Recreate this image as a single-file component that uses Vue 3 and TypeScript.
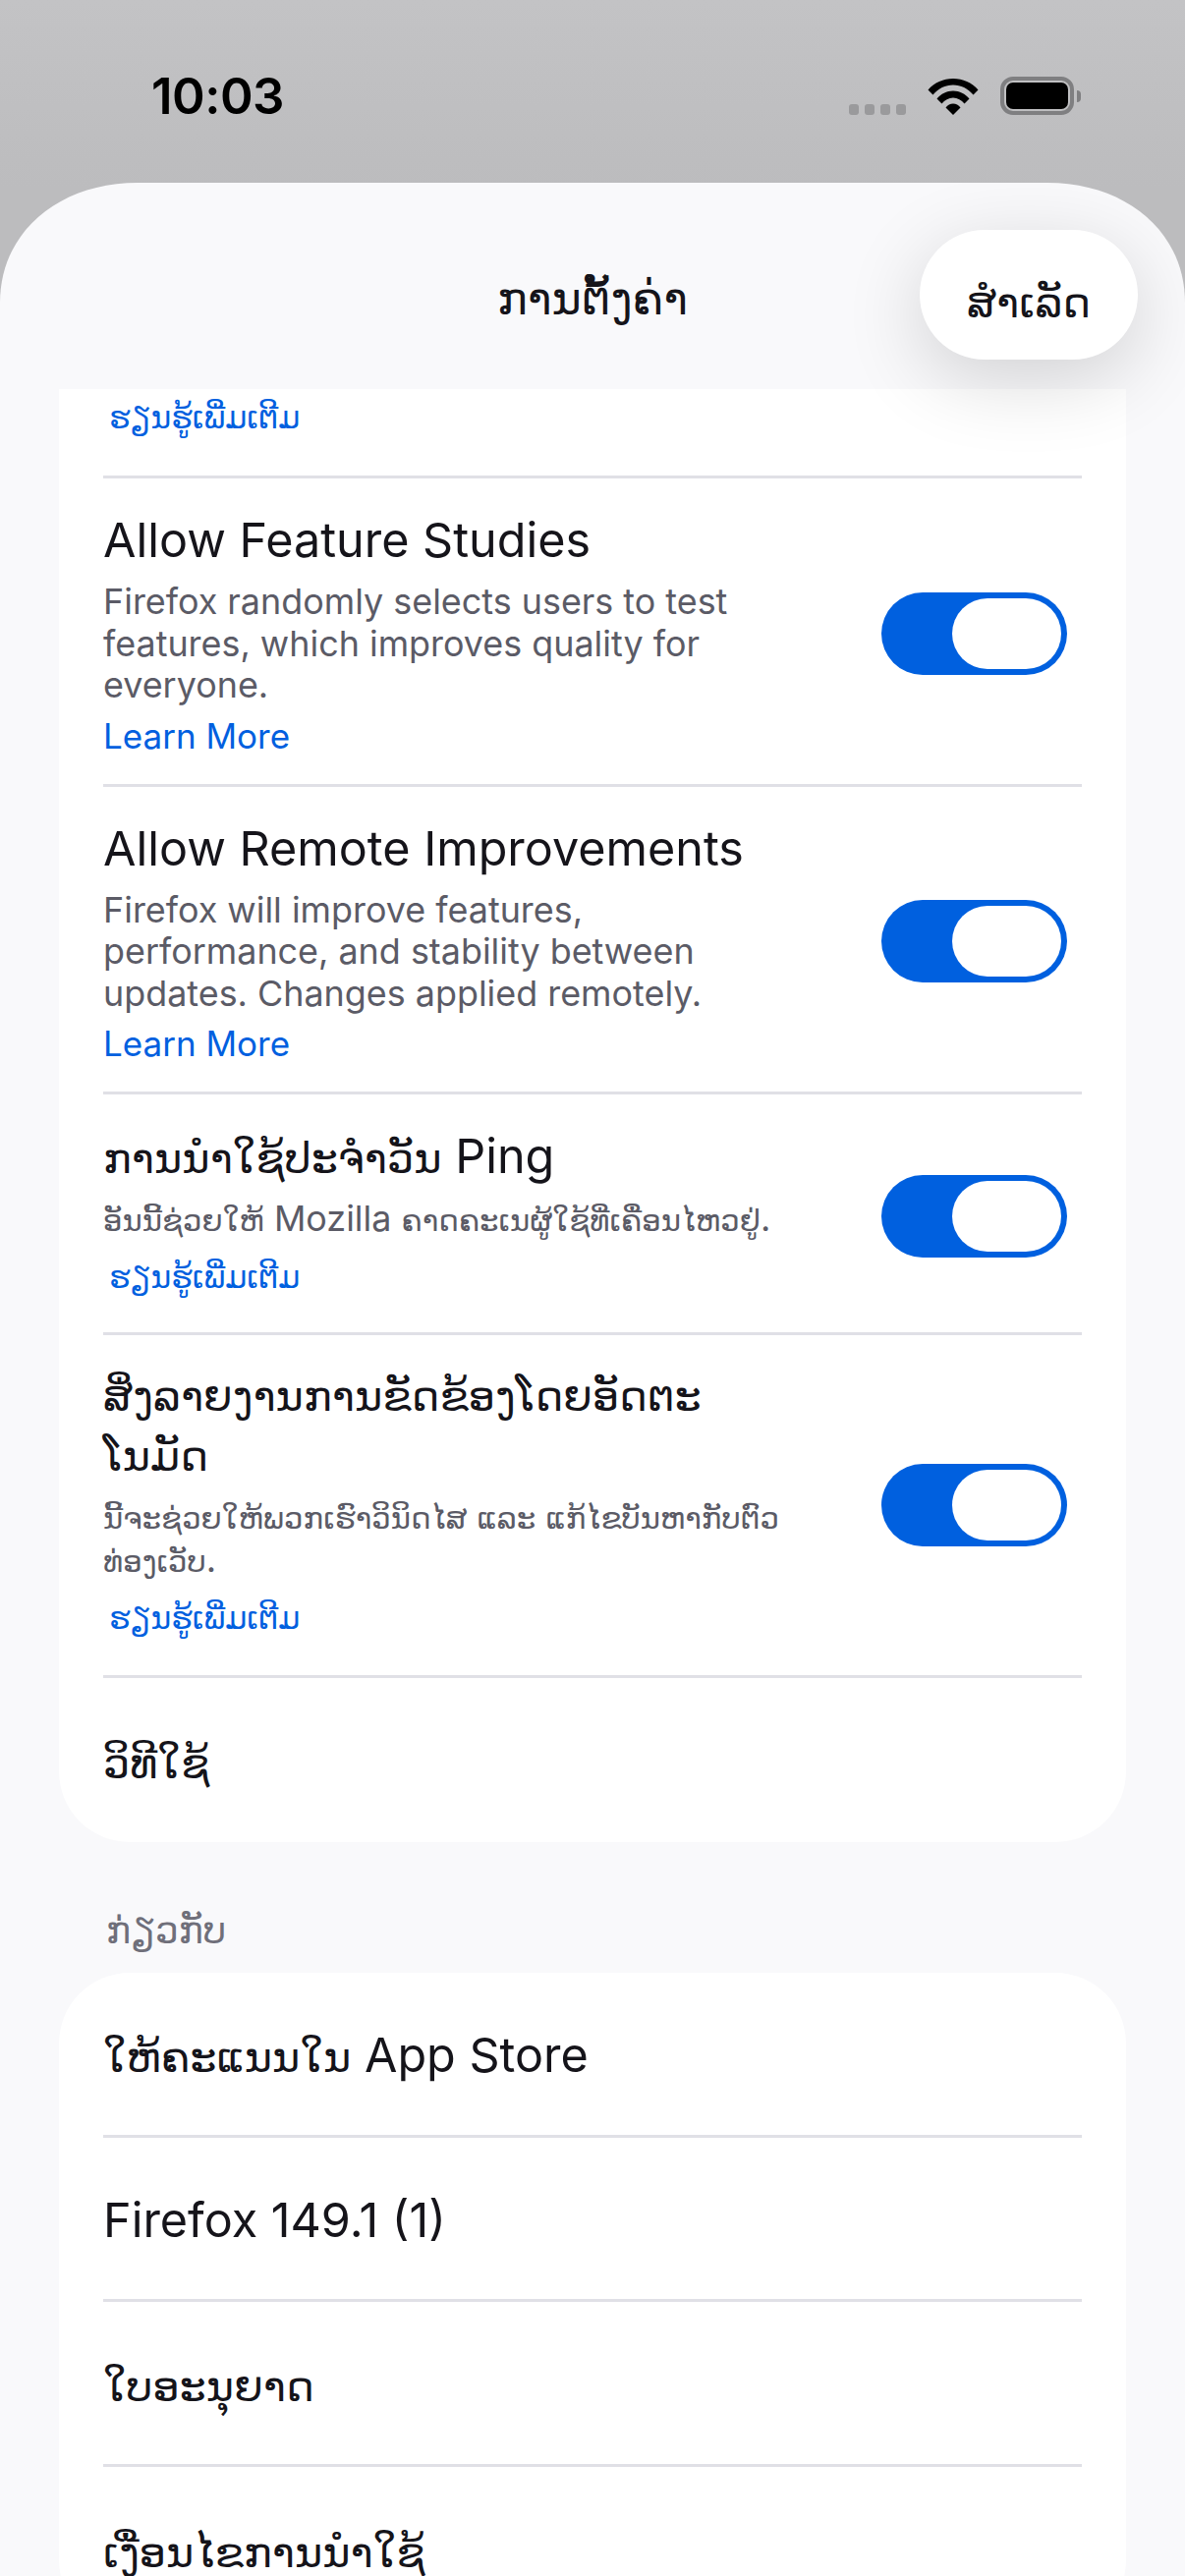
<script setup lang="ts">
interface Row {
  title: string
  sub?: string
  link?: string
  on?: boolean
}
const rows: Row[] = [
  { title: 'Allow Feature Studies', sub: 'Firefox randomly selects users to test features, which improves quality for everyone.', link: 'Learn More', on: true },
  { title: 'Allow Remote Improvements', sub: 'Firefox will improve features, performance, and stability between updates. Changes applied remotely.', link: 'Learn More', on: true },
  { title: 'ການນຳໃຊ້ປະຈຳວັນ Ping', sub: 'ອັນນີ້ຊ່ວຍໃຫ້ Mozilla ຄາດຄະເນຜູ້ໃຊ້ທີ່ເຄື່ອນໄຫວຢູ່.', link: 'ຮຽນຮູ້ເພີ່ມເຕີມ', on: true },
  { title: 'ສິ່ງລາຍງານການຂັດຂ້ອງໂດຍອັດຕະ\nໂນມັດ', sub: 'ນີ້ຈະຊ່ວຍໃຫ້ພວກເຮົາວິນິດໄສ ແລະ ແກ້ໄຂບັນຫາກັບຕົວ\nທ່ອງເວັບ.', link: 'ຮຽນຮູ້ເພີ່ມເຕີມ', on: true },
  { title: 'ວິທີໃຊ້' }
]
const about: string[] = ['ໃຫ້ຄະແນນໃນ App Store', 'Firefox 149.1 (1)', 'ໃບອະນຸຍາດ', 'ເງື່ອນໄຂການນຳໃຊ້']

const LAO = /[\u0E80-\u0EFF]/
function isLao(text: string): boolean {
  return LAO.test(text)
}
function parts(text: string): string[] {
  return text.split(/([\u0E80-\u0EFF]+)/).filter((p) => p.length > 0)
}
</script>

<template>
  <div class="screen">
    <div class="status">
      <span class="time">10:03</span>
      <div class="status-icons">
        <span class="dots"><i></i><i></i><i></i><i></i></span>
        <svg class="wifi" width="52" height="38" viewBox="0 0 52 38">
          <path d="M0.5 12.5C7 5 16 1 26 1s19 4 25.5 11.5l-5 5C41 11 34 7.5 26 7.5S11 11 5.5 17.500z" />
          <path d="M9.500 21.500C13.500 16.500 19.500 13.500 26 13.500s12.500 3 16.500 8l-5 5C34.500 23 30.500 20.500 26 20.500s-8.500 2.500-11.500 6z" />
          <path d="M18.500 30.500C20.500 28 23 26.500 26 26.500s5.500 1.500 7.500 4L26 38z" />
        </svg>
        <span class="battery"><span class="battery-fill"></span></span>
        <span class="battery-cap"></span>
      </div>
    </div>

    <div class="sheet">
      <header class="nav">
        <h1 class="nav-title">ການຕັ້ງຄ່າ</h1>
        <button class="done">ສຳເລັດ</button>
      </header>

      <main class="content">
        <section class="card card-cut">
          <div class="row row-stub">
            <a class="link link-lao"><span class="lo">ຮຽນຮູ້ເພີ່ມເຕີມ</span></a>
          </div>
          <div
            v-for="r in rows"
            :key="r.title"
            class="row"
            :class="{ 'row-lao': isLao(r.title) && r.sub, 'row-two': r.title.includes('\n'), 'row-plain': !r.sub }"
          >
            <div class="row-text">
              <div class="title"><span v-for="(p, i) in parts(r.title)" :key="i" :class="{ lo: isLao(p) }">{{ p }}</span></div>
              <div v-if="r.sub" class="sub"><span v-for="(p, i) in parts(r.sub)" :key="i" :class="{ lo: isLao(p) }">{{ p }}</span></div>
              <a v-if="r.link" class="link" :class="{ 'link-lao': isLao(r.link) }"><span :class="{ lo: isLao(r.link) }">{{ r.link }}</span></a>
            </div>
            <span v-if="r.on" class="toggle"><span class="thumb"></span></span>
          </div>
        </section>

        <div class="section-label">ກ່ຽວກັບ</div>

        <section class="card">
          <div v-for="a in about" :key="a" class="row row-plain">
            <div class="title"><span v-for="(p, i) in parts(a)" :key="i" :class="{ lo: isLao(p) }">{{ p }}</span></div>
          </div>
        </section>
      </main>
    </div>
  </div>
</template>

<style scoped>
.screen {
  width: 1206px;
  height: 2622px;
  overflow: hidden;
  background: linear-gradient(#c3c3c5, #bcbcbe 190px);
  font-family: Inter, "DejaVu Sans", sans-serif;
  display: flex;
  flex-direction: column;
}
.status {
  height: 186px;
  flex: none;
  display: flex;
  justify-content: space-between;
  align-items: flex-start;
  padding: 70px 0 0 154px;
  box-sizing: border-box;
}
.time {
  font-size: 51px;
  font-weight: 600;
  line-height: 56px;
  color: #000;
  letter-spacing: -0.5px;
}
.status-icons {
  display: flex;
  align-items: center;
  padding: 8px 106px 0 0;
  height: 39px;
}
.dots {
  display: flex;
  gap: 6px;
  margin-right: 22px;
  align-self: flex-end;
}
.dots i {
  width: 10px;
  height: 11px;
  border-radius: 3px;
  background: #9a9a9c;
}
.wifi {
  fill: #000;
  margin-right: 22px;
}
.battery {
  width: 75px;
  height: 39px;
  box-sizing: border-box;
  border: 4px solid #7f7f81;
  border-radius: 13px;
  padding: 2px;
  display: flex;
}
.battery-fill {
  flex: 1;
  background: #000;
  border-radius: 7px;
}
.battery-cap {
  width: 4px;
  height: 12px;
  margin-left: 3px;
  background: #7f7f81;
  border-radius: 0 6px 6px 0;
}
.sheet {
  flex: 1;
  background: #f9f9fb;
  clip-path: path('M0 122C0 50 60 0 140 0H1066C1146 0 1206 50 1206 122V2436H0Z');
  display: flex;
  flex-direction: column;
  min-height: 0;
}
.nav {
  height: 210px;
  flex: none;
  position: relative;
  display: flex;
  align-items: center;
  justify-content: center;
  z-index: 2;
}
.nav-title {
  margin: 0;
  font-size: 46px;
  font-weight: 400;
  color: #15141a;
  line-height: 60px;
  padding-top: 24px;
}
.done {
  position: absolute;
  left: 936px;
  top: 48px;
  width: 222px;
  height: 132px;
  border: 0;
  border-radius: 66px;
  background: #fff;
  color: #15141a;
  font: 400 43px/60px Inter, "DejaVu Sans", sans-serif;
  padding: 14px 0 0;
  box-shadow: 0 20px 80px rgba(0, 0, 0, 0.16);
}
.content {
  padding: 0 60px;
  min-height: 0;
  overflow: hidden;
}
.card {
  background: #fff;
  border-radius: 72px;
  padding: 0 45px;
}
.card-cut {
  border-radius: 0 0 72px 72px;
}
.row {
  display: flex;
  align-items: center;
  justify-content: space-between;
  border-bottom: 3px solid #e0e0e6;
  box-sizing: border-box;
  padding: 33px 15px 28px 0;
}
.row:last-child {
  border-bottom: 0;
}
.row-stub {
  height: 91px;
  padding: 6px 0 0;
  align-items: flex-start;
}
.row-plain {
  height: 167.500px;
  padding: 5px 0 0;
}
.row-lao {
  padding-bottom: 35px;
}
.row-lao .toggle {
  margin-top: 8px;
}
.row-two {
  padding-top: 30px;
  padding-bottom: 37px;
}
.row-text {
  flex: 1;
  min-width: 0;
  padding-right: 27px;
}
.title {
  font-size: 48.500px;
  line-height: 60px;
  color: #15141a;
  white-space: pre-line;
}
.title .lo {
  font-size: 43px;
}
.sub {
  font-size: 35.900px;
  line-height: 42.500px;
  color: #5b5b66;
  margin-top: 11px;
  max-width: 700px;
  white-space: pre-line;
}
.sub .lo {
  font-size: 30.800px;
}
.link {
  display: block;
  font-size: 35px;
  line-height: 42px;
  color: #0060df;
  margin-top: 9px;
}
.link .lo {
  font-size: 31.500px;
}
.link-lao {
  padding-left: 6px;
  margin-top: 0;
}
.row-lao .link {
  margin-top: 13px;
}
.toggle {
  flex: none;
  width: 189px;
  height: 84px;
  border-radius: 42px;
  background: #0060df;
  box-sizing: border-box;
  padding: 6px;
  display: flex;
  justify-content: flex-end;
}
.thumb {
  width: 111px;
  height: 72px;
  border-radius: 36px;
  background: #fff;
}
.section-label {
  font-size: 37.500px;
  line-height: 50px;
  color: #6f6f7a;
  padding: 65px 0 18px 48px;
}
</style>

<style>
html, body { margin: 0; background: #f9f9fb; }
</style>
